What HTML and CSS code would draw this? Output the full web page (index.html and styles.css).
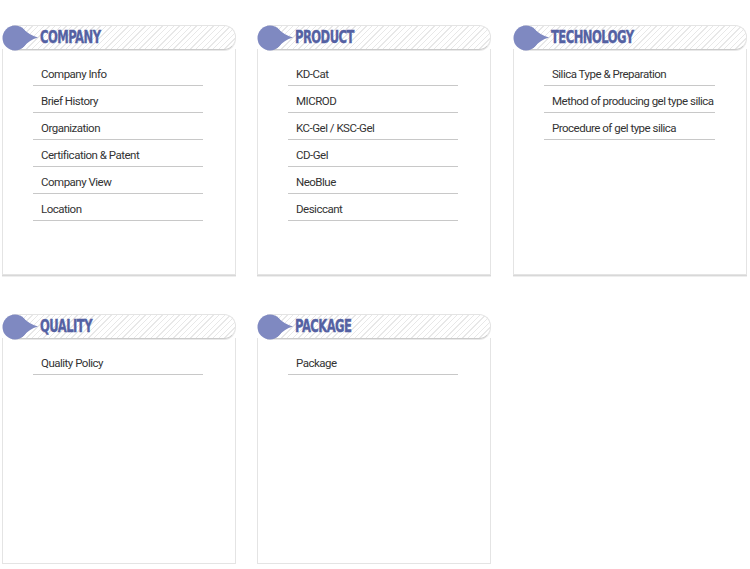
FILE: index.html
```html
<!DOCTYPE html>
<html>
<head>
<meta charset="utf-8">
<link rel="stylesheet" href="styles.css">
</head>
<body>
<div class="grid">
  <section class="panel">
    <div class="head">
      <svg class="blob" width="36" height="26" viewBox="0 0 36 26"><circle cx="13" cy="13" r="12.5" fill="#7f89c1"/><path d="M20 3 Q27 10 36 12.5 Q27 15 20 23 Z" fill="#7f89c1"/></svg>
      <h2>COMPANY</h2>
    </div>
    <ul class="body">
      <li>Company Info</li>
      <li>Brief History</li>
      <li>Organization</li>
      <li>Certification &amp; Patent</li>
      <li>Company View</li>
      <li>Location</li>
    </ul>
  </section>
  <section class="panel">
    <div class="head">
      <svg class="blob" width="36" height="26" viewBox="0 0 36 26"><circle cx="13" cy="13" r="12.5" fill="#7f89c1"/><path d="M20 3 Q27 10 36 12.5 Q27 15 20 23 Z" fill="#7f89c1"/></svg>
      <h2>PRODUCT</h2>
    </div>
    <ul class="body">
      <li>KD-Cat</li>
      <li>MICROD</li>
      <li>KC-Gel / KSC-Gel</li>
      <li>CD-Gel</li>
      <li>NeoBlue</li>
      <li>Desiccant</li>
    </ul>
  </section>
  <section class="panel wide">
    <div class="head">
      <svg class="blob" width="36" height="26" viewBox="0 0 36 26"><circle cx="13" cy="13" r="12.5" fill="#7f89c1"/><path d="M20 3 Q27 10 36 12.5 Q27 15 20 23 Z" fill="#7f89c1"/></svg>
      <h2>TECHNOLOGY</h2>
    </div>
    <ul class="body">
      <li>Silica Type &amp; Preparation</li>
      <li>Method of producing gel type silica</li>
      <li>Procedure of gel type silica</li>
    </ul>
  </section>
  <section class="panel">
    <div class="head">
      <svg class="blob" width="36" height="26" viewBox="0 0 36 26"><circle cx="13" cy="13" r="12.5" fill="#7f89c1"/><path d="M20 3 Q27 10 36 12.5 Q27 15 20 23 Z" fill="#7f89c1"/></svg>
      <h2>QUALITY</h2>
    </div>
    <ul class="body">
      <li>Quality Policy</li>
    </ul>
  </section>
  <section class="panel">
    <div class="head">
      <svg class="blob" width="36" height="26" viewBox="0 0 36 26"><circle cx="13" cy="13" r="12.5" fill="#7f89c1"/><path d="M20 3 Q27 10 36 12.5 Q27 15 20 23 Z" fill="#7f89c1"/></svg>
      <h2>PACKAGE</h2>
    </div>
    <ul class="body">
      <li>Package</li>
    </ul>
  </section>
</div>
</body>
</html>
```
FILE: styles.css
```css
html, body {
  margin: 0;
  padding: 0;
  background: #fff;
}
.grid {
  display: grid;
  grid-template-columns: 234px 234px 235px;
  column-gap: 21px;
  row-gap: 39px;
  padding: 25px 0 0 2px;
}
.panel {
  position: relative;
  height: 250px;
  display: flex;
  flex-direction: column;
}
.wide {
  margin-left: 1px;
}
.head {
  position: relative;
  height: 23px;
  margin-left: 10px;
  border: 1px solid #e4e4e4;
  border-bottom: 1px solid #cbcbcb;
  border-left: none;
  border-radius: 0 12px 12px 0;
  box-shadow: 0 1px 0 #e8e8e8;
  background: repeating-linear-gradient(-45deg, #fff 0 3px, #e8e8e8 3px 4px);
  z-index: 1;
}
.blob {
  position: absolute;
  left: -10px;
  top: -1px;
}
.head h2 {
  margin: 0;
  position: absolute;
  left: 28px;
  top: 1px;
  font-family: "DejaVu Sans", sans-serif;
  font-weight: bold;
  font-size: 17.5px;
  line-height: 20px;
  letter-spacing: -0.8px;
  color: #5461a3;
  transform: scaleX(0.66);
  transform-origin: left center;
  -webkit-text-stroke: 0.4px #5461a3;
}
.body {
  flex: 1;
  margin: 0;
  margin-top: -1px;
  list-style: none;
  padding: 10px 0 0 30px;
  border: 1px solid #e4e4e4;
  border-top: none;
  box-shadow: 0 1px 0 #d8d8d8, 0 2px 0 #eee;
}
.body li {
  width: 170px;
  height: 22px;
  padding-top: 4px;
  border-bottom: 1px solid #c8c8c8;
  text-indent: 8px;
  font-family: Roboto, "Liberation Sans", sans-serif;
  font-size: 11.5px;
  line-height: 22px;
  color: #333;
  letter-spacing: -0.5px;
  white-space: nowrap;
}
.wide .body li {
  width: 171px;
}
```
